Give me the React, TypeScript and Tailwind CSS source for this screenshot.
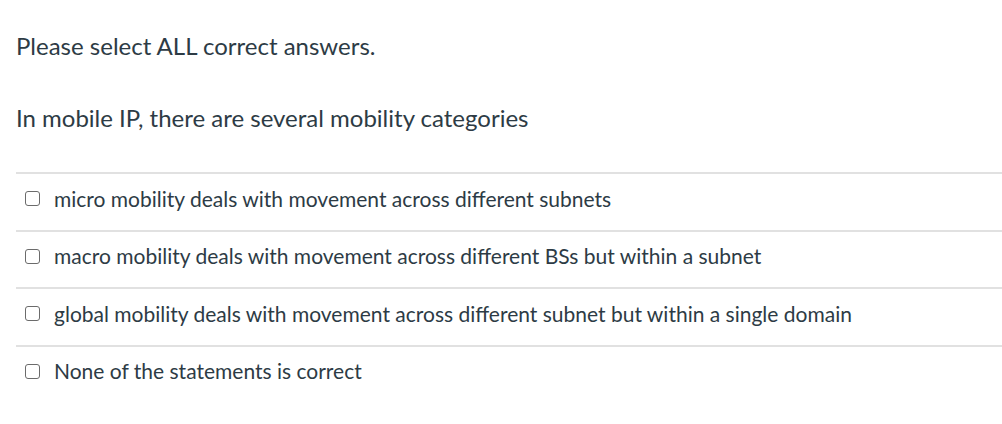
import React from "react";

const options = [
  "micro mobility deals with movement across different subnets",
  "macro mobility deals with movement across different BSs but within a subnet",
  "global mobility deals with movement across different subnet but within a single domain",
  "None of the statements is correct",
];

export default function App() {
  return (
    <div className="w-[1002px] h-[424px] bg-white text-[#2d3b45] font-['Lato',sans-serif] pl-4 pt-[31px]">
      <p className="text-[24px] leading-[30px]">Please select ALL correct answers.</p>
      <p className="text-[24px] leading-[30px] mt-[42px]">In mobile IP, there are several mobility categories</p>

      <div className="mt-[39px]">
        {options.map((opt) => (
          <label
            key={opt}
            className="flex items-center h-[57.5px] border-t-2 border-[#e1e1e1] pl-[9px] pb-[6px]"
          >
            <input
              type="checkbox"
              className="appearance-none w-[15px] h-[15px] border border-[#6b6b6b] rounded-[3px] bg-white mr-[14px] shrink-0"
            />
            <span className="text-[21px] leading-[24px]">{opt}</span>
          </label>
        ))}
      </div>
    </div>
  );
}
